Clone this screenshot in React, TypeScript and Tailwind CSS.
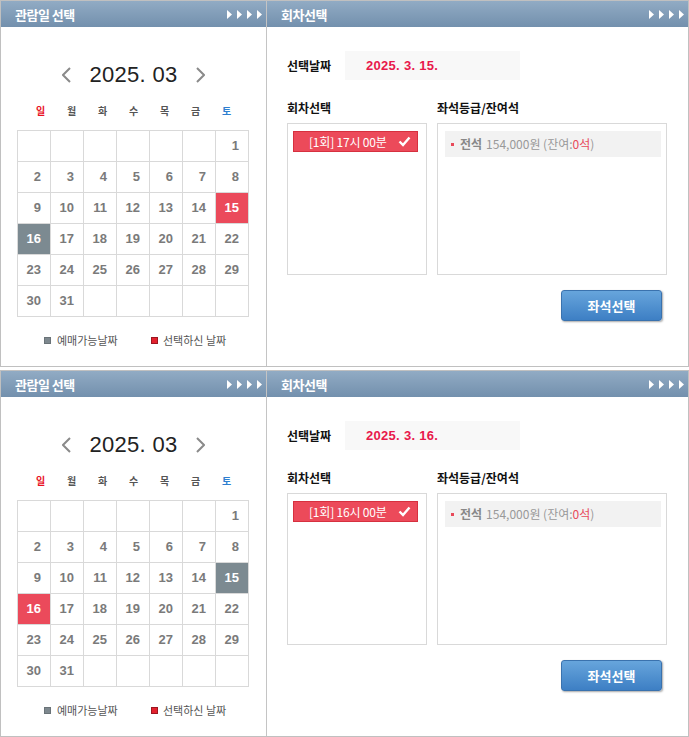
import React from "react";

const KR = { fontFamily: '"Noto Sans CJK KR", "Noto Sans", sans-serif' };
const LS = { fontFamily: '"Liberation Sans", Arial, sans-serif' };

function Arrows() {
  return (
    <div className="flex gap-[5px]">
      {[0, 1, 2, 3].map((i) => (
        <svg key={i} width="5" height="9" viewBox="0 0 5 9">
          <polygon points="0,0 5,4.5 0,9" fill="#ffffff" />
        </svg>
      ))}
    </div>
  );
}

function Header({ title, pr }: { title: string; pr: string }) {
  return (
    <div
      className={`h-[26px] flex items-center justify-between pl-[14px] ${pr} bg-linear-to-b from-[#91abc4] to-[#7390ad]`}
    >
      <span
        className="text-white font-bold text-[13px] tracking-[-0.5px] leading-none"
        style={KR}
      >
        {title}
      </span>
      <Arrows />
    </div>
  );
}

function Chevron({ dir }: { dir: "l" | "r" }) {
  return (
    <svg width="9" height="16" viewBox="0 0 9 16">
      <polyline
        points={dir === "l" ? "8,1 1,8 8,15" : "1,1 8,8 1,15"}
        fill="none"
        stroke="#8a8a8a"
        strokeWidth="2"
      />
    </svg>
  );
}

function Calendar({ selected, available }: { selected: number; available: number }) {
  const days = ["일", "월", "화", "수", "목", "금", "토"];
  const cells: (number | null)[] = [];
  for (let i = 0; i < 6; i++) cells.push(null);
  for (let d = 1; d <= 31; d++) cells.push(d);
  while (cells.length < 42) cells.push(null);
  return (
    <div className="w-[266px] shrink-0 border-r border-[#c4c4c4] flex flex-col">
      <Header title="관람일 선택" pr="pr-[4px]" />
      <div className="mt-[33px] h-[30px] flex items-center justify-center gap-[18px]">
        <Chevron dir="l" />
        <span className="text-[22px] text-[#222] leading-none tracking-[0.3px]" style={LS}>
          2025. 03
        </span>
        <Chevron dir="r" />
      </div>
      <div className="mt-[13px] w-[217px] mx-auto grid grid-cols-7 h-[16px] items-center">
        {days.map((d, i) => (
          <span
            key={d}
            className={`text-center text-[10px] font-bold leading-none ${
              i === 0 ? "text-[#e8101e]" : i === 6 ? "text-[#2f7fd0]" : "text-[#555]"
            }`}
            style={KR}
          >
            {d}
          </span>
        ))}
      </div>
      <div className="mt-[11px] ml-[16px] w-[232px] grid grid-cols-7 border-l border-t border-[#d9d9d9]">
        {cells.map((c, i) => {
          const isSel = c === selected;
          const isAv = c === available;
          return (
            <div
              key={i}
              className={`h-[31px] border-r border-b border-[#d9d9d9] flex items-center justify-end pr-[9px] text-[13px] font-bold ${
                isSel
                  ? "bg-[#eb4a5b] text-white"
                  : isAv
                  ? "bg-[#7c8a91] text-white"
                  : "text-[#7a7a7a]"
              }`}
              style={LS}
            >
              {c ?? ""}
            </div>
          );
        })}
      </div>
      <div className="mt-[15px] h-[16px] flex items-center pl-[43px]">
        <span className="w-[7px] h-[7px] bg-[#7d888e] border border-[#6a7378]" />
        <span
          className="ml-[6px] w-[94px] text-[11px] tracking-[0px] text-[#555] leading-none"
          style={KR}
        >
          예매가능날짜
        </span>
        <span className="w-[7px] h-[7px] bg-[#e3222e] border border-[#9c1620]" />
        <span
          className="ml-[5px] text-[11px] tracking-[0px] text-[#555] leading-none"
          style={KR}
        >
          선택하신 날짜
        </span>
      </div>
    </div>
  );
}

function Session({ date, time }: { date: string; time: string }) {
  return (
    <div className="flex-1 flex flex-col">
      <Header title="회차선택" pr="pr-[4px]" />
      <div className="mt-[24px] pl-[20px] flex items-center">
        <span className="w-[58px] text-[12px] font-bold text-[#111]" style={KR}>
          선택날짜
        </span>
        <div className="w-[175px] h-[29px] bg-[#f8f8f8] flex items-center pl-[21px]">
          <span className="text-[13px] font-bold text-[#e8194b] tracking-[0.3px]" style={LS}>
            {date}
          </span>
        </div>
      </div>
      <div className="mt-[20px] pl-[20px] flex h-[16px] items-center">
        <span className="w-[150px] text-[12px] font-bold text-[#111]" style={KR}>
          회차선택
        </span>
        <span className="text-[12px] font-bold text-[#111]" style={KR}>
          좌석등급/잔여석
        </span>
      </div>
      <div className="mt-[7px] pl-[20px] flex gap-[10px]">
        <div className="w-[140px] h-[152px] border border-[#d9d9d9] pt-[7px] pl-[5px]">
          <div className="w-[125px] h-[21px] bg-[#ec4a5a] border border-[#d6303f] flex items-center pl-[15px] pr-[6px] justify-between">
            <span className="text-white text-[12px] leading-none tracking-[-0.2px]" style={KR}>
              [1회] {time}
            </span>
            <svg width="13" height="11" viewBox="0 0 13 11">
              <polyline points="1.5,5.5 5,9 11.5,1.5" fill="none" stroke="#fff" strokeWidth="2.4" />
            </svg>
          </div>
        </div>
        <div className="w-[230px] h-[152px] border border-[#d9d9d9] pt-[7px] pl-[7px]">
          <div className="w-[216px] h-[26px] bg-[#f2f2f2] flex items-center pl-[6px]">
            <span className="w-[3px] h-[3px] bg-[#e8495a]" />
            <span className="ml-[6px] text-[12px] font-bold text-[#888]" style={KR}>
              전석
            </span>
            <span className="ml-[4px] text-[12px] text-[#999]" style={KR}>
              154,000원 (잔여:<span className="text-[#e8495a]">0석</span>)
            </span>
          </div>
        </div>
      </div>
      <div className="mt-[15px] flex justify-end pr-[26px]">
        <div
          className="w-[101px] h-[31px] rounded-[3px] border border-[#3a72ae] bg-linear-to-b from-[#67a5dc] to-[#3d7fc4] shadow-[1px_1px_2px_rgba(0,0,0,0.35)] flex items-center justify-center text-white font-bold text-[13px]"
          style={KR}
        >
          좌석선택
        </div>
      </div>
    </div>
  );
}

function Block({ sel, av, date, time }: { sel: number; av: number; date: string; time: string }) {
  return (
    <div className="h-[367px] border border-[#c0c0c0] flex bg-white">
      <Calendar selected={sel} available={av} />
      <Session date={date} time={time} />
    </div>
  );
}

export default function App() {
  return (
    <div className="w-[689px] h-[737px] bg-white flex flex-col gap-[3px]">
      <Block sel={15} av={16} date="2025.  3.  15." time="17시 00분" />
      <Block sel={16} av={15} date="2025.  3.  16." time="16시 00분" />
    </div>
  );
}
